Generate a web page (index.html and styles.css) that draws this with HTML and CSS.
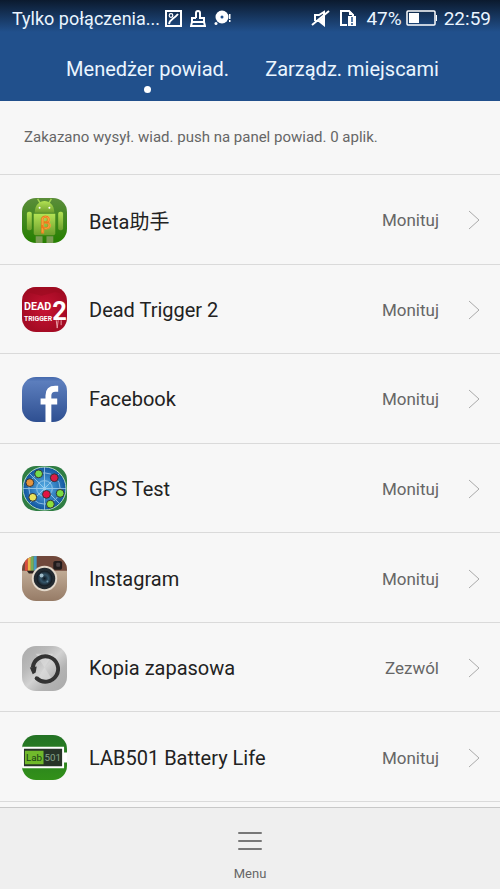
FILE: index.html
```
<!DOCTYPE html>
<html lang="pl">

<head>
  <meta charset="UTF-8">
  <meta name="viewport" content="width=device-width, initial-scale=1.0">
  <title>Menedżer powiad.</title>
  <link rel="stylesheet" href="styles.css">
</head>

<body>
  <header class="header">
    <div class="status-bar">
      <span class="carrier">Tylko połączenia...</span>
      <div class="status-icons">
        <svg width="17" height="17" viewBox="0 0 17 17" fill="none" stroke="#fff" stroke-width="2">
          <rect x="1" y="1" width="15" height="15" />
          <circle cx="6" cy="5.5" r="1.8" stroke-width="1.2" />
          <path d="M4 14c1-5 5-5 9-10" />
        </svg>
        <svg width="16" height="17" viewBox="0 0 16 17" fill="none" stroke="#fff" stroke-width="2">
          <path d="M6 8V3q0-2 2-2t2 2v5h4v4H2V8h4M2 12l-1 4h14l-1-4" />
        </svg>
        <svg width="18" height="16" viewBox="0 0 18 16" fill="#fff">
          <circle cx="8" cy="7" r="6.5" />
          <circle cx="8" cy="7" r="1.5" fill="#21508c" />
          <circle cx="2" cy="13.5" r="1.5" />
          <path d="M15 4h1.5v5H15zM15 10h1.5v2H15z" />
        </svg>
      </div>
      <div class="status-right">
        <svg width="19" height="18" viewBox="0 0 19 18" fill="none" stroke="#fff" stroke-width="2">
          <path d="M4 12V6h4l5-3v13l-5-4H4M1 16L18 2" />
          <path d="M8 11l5-4v9z" fill="#fff" stroke="none" />
        </svg>
        <svg class="sim" width="18" height="18" viewBox="0 0 18 18" fill="none" stroke="#fff" stroke-width="2">
          <path d="M8 16H2V2h8l4 4v2" />
          <path d="M10 1l5 5h-5z" fill="#fff" stroke="none" />
          <path d="M9 7h8v10H9z" fill="#fff" stroke="none" />
          <path d="M13 8v5M13 14v2" stroke="#21508c" stroke-width="1.5" />
        </svg>
        <span>47%</span>
        <svg class="battery" width="32" height="16" viewBox="0 0 32 16">
          <rect x="1" y="1" width="28" height="14" rx="1" fill="none" stroke="#fff" stroke-width="1.5" />
          <path d="M3 3h10v10H3zM30 5h1v6h-1z" fill="#fff" />
        </svg>
        <span>22:59</span>
      </div>
    </div>
    <nav class="tabs">
      <a class="tab active" href="#powiad">Menedżer powiad.</a>
      <a class="tab" href="#miejsca">Zarządz. miejscami</a>
    </nav>
  </header>

  <main class="content">
    <p class="summary">Zakazano wysył. wiad. push na panel powiad. 0 aplik.</p>

    <div class="app-list">
      <a class="app" href="#beta">
        <svg class="app-icon" viewBox="0 0 46 46">
          <defs>
            <linearGradient id="betaBg" x2="0" y2="1">
              <stop stop-color="#5b8d3a" />
              <stop offset="1" stop-color="#258000" />
            </linearGradient>
            <linearGradient id="droid" x2="0" y2="1">
              <stop stop-color="#b4e354" />
              <stop offset="1" stop-color="#6d9f2d" />
            </linearGradient>
          </defs>
          <rect width="46" height="46" fill="url(#betaBg)" />
          <path d="M16 1l3 5M30 1l-3 5" stroke="#a5d653" stroke-width="1.5" />
          <path d="M13 15C13-1 33-1 33 15z" fill="url(#droid)" />
          <circle cx="18" cy="10" r="1" fill="#fff" />
          <circle cx="28" cy="10" r="1" fill="#fff" />
          <path d="M12 16h22v20q0 2-2 2H14q-2 0-2-2z" fill="url(#droid)" />
          <rect x="5" y="14" width="5" height="19" rx="2" fill="url(#droid)" />
          <rect x="37" y="14" width="5" height="19" rx="2" fill="url(#droid)" />
          <path d="M14 39h7v7h-7zM25 39h7v7h-7z" fill="#7b9b55" />
          <text class="beta-mark" x="24" y="32" text-anchor="middle">β</text>
        </svg>
        <span class="app-name">Beta助手</span>
        <span class="app-state">Monituj</span>
        <svg class="chevron" viewBox="0 0 12 20"><path d="M1 1l10 9-10 9" /></svg>
      </a>

      <a class="app" href="#dead-trigger">
        <svg class="app-icon" viewBox="0 0 46 46">
          <defs>
            <radialGradient id="deadBg">
              <stop stop-color="#c81434" />
              <stop offset="1" stop-color="#a50b24" />
            </radialGradient>
          </defs>
          <rect width="46" height="46" fill="url(#deadBg)" />
          <path d="M0 0h46v8L34 5 20 9 8 6 0 10z" fill="#9b0b20" opacity=".6" />
          <g class="dead-mark">
            <text x="2" y="24" font-size="11">DEAD</text>
            <text x="2" y="35" font-size="7">TRIGGER</text>
            <text x="31" y="34" font-size="26">2</text>
          </g>
          <path d="M35 34l1 8 1-8M40 34v5" stroke="#e7a0a8" fill="none" />
        </svg>
        <span class="app-name">Dead Trigger 2</span>
        <span class="app-state">Monituj</span>
        <svg class="chevron" viewBox="0 0 12 20"><path d="M1 1l10 9-10 9" /></svg>
      </a>

      <a class="app" href="#facebook">
        <svg class="app-icon" viewBox="0 0 46 46">
          <defs>
            <linearGradient id="fbBg" x2="0" y2="1">
              <stop stop-color="#4468ac" />
              <stop offset=".1" stop-color="#5c7ebd" />
              <stop offset="1" stop-color="#2e4f91" />
            </linearGradient>
          </defs>
          <rect width="46" height="46" fill="url(#fbBg)" />
          <path d="M27 46V19q0-7 7-7h3M19 25h17" fill="none" stroke="#fff" stroke-width="6" />
        </svg>
        <span class="app-name">Facebook</span>
        <span class="app-state">Monituj</span>
        <svg class="chevron" viewBox="0 0 12 20"><path d="M1 1l10 9-10 9" /></svg>
      </a>

      <a class="app" href="#gps-test">
        <svg class="app-icon" viewBox="0 0 46 46">
          <defs>
            <radialGradient id="gpsBg">
              <stop stop-color="#5db4ea" />
              <stop offset="1" stop-color="#12569f" />
            </radialGradient>
          </defs>
          <rect width="46" height="46" fill="#2f7e43" />
          <circle cx="23" cy="23" r="22" fill="url(#gpsBg)" stroke="#b7dcc5" />
          <g fill="none" stroke="#b7dcf4" stroke-width="1" opacity=".7">
            <circle cx="23" cy="23" r="8" />
            <circle cx="23" cy="23" r="16" />
            <path d="M23 1v44M1 23h44M8 8l30 30M38 8L8 38" />
          </g>
          <g stroke="#333" stroke-width="1">
            <circle cx="17" cy="8" r="4" fill="#75dc4d" />
            <circle cx="33" cy="12" r="4" fill="#d91c46" />
            <circle cx="8" cy="17" r="4" fill="#e4953e" />
            <circle cx="11" cy="32" r="4" fill="#e9e35b" />
            <circle cx="25" cy="29" r="4" fill="#e31443" />
            <circle cx="39" cy="28" r="4" fill="#79dc43" />
            <circle cx="29" cy="39" r="4" fill="#8ddf3b" />
          </g>
        </svg>
        <span class="app-name">GPS Test</span>
        <span class="app-state">Monituj</span>
        <svg class="chevron" viewBox="0 0 12 20"><path d="M1 1l10 9-10 9" /></svg>
      </a>

      <a class="app" href="#instagram">
        <svg class="app-icon" viewBox="0 0 46 46">
          <defs>
            <linearGradient id="instaBg" x2="0" y2="1">
              <stop stop-color="#d5c3ad" />
              <stop offset="1" stop-color="#967b66" />
            </linearGradient>
            <radialGradient id="lens">
              <stop stop-color="#0e1822" />
              <stop offset=".5" stop-color="#35566a" />
              <stop offset="1" stop-color="#11161c" />
            </radialGradient>
          </defs>
          <rect width="46" height="46" fill="url(#instaBg)" />
          <path d="M0 0h46v15H0z" fill="#70483b" />
          <path d="M3 0h3v15H3z" fill="#d94b3d" />
          <path d="M6 0h3v15H6z" fill="#e9b54a" />
          <path d="M9 0h3v15H9z" fill="#77af57" />
          <path d="M12 0h3v15h-3z" fill="#479bc2" />
          <path d="M5 15h9v3H7z" fill="#2c211e" />
          <rect x="32" y="5" width="9" height="9" rx="2" fill="#211b1c" />
          <rect x="35" y="7" width="4" height="4" rx="1" fill="#4b4245" />
          <circle cx="23" cy="23" r="13" fill="#e3d8ca" />
          <circle cx="23" cy="23" r="11" fill="#222a30" />
          <circle cx="23" cy="23" r="8" fill="url(#lens)" />
          <circle cx="20" cy="20" r="2" fill="#a1bdca" />
          <circle cx="26" cy="26" r="1" fill="#6a8fa4" />
        </svg>
        <span class="app-name">Instagram</span>
        <span class="app-state">Monituj</span>
        <svg class="chevron" viewBox="0 0 12 20"><path d="M1 1l10 9-10 9" /></svg>
      </a>

      <a class="app" href="#kopia">
        <svg class="app-icon" viewBox="0 0 46 46">
          <defs>
            <linearGradient id="metal" x2="1" y2="1">
              <stop stop-color="#aaa" />
              <stop offset=".3" stop-color="#b9b9b9" />
              <stop offset=".5" stop-color="#d2d2d2" />
              <stop offset=".7" stop-color="#b3b3b3" />
              <stop offset="1" stop-color="#aaa" />
            </linearGradient>
          </defs>
          <rect width="46" height="46" fill="url(#metal)" />
          <path d="M23 22L14 8h18zM23 22l-9 14h18z" fill="#ddd" opacity=".6" />
          <path d="M15 33A13 13 0 1 0 11 22" fill="none" stroke="#333" stroke-width="4" />
          <circle cx="15" cy="33" r="2" fill="#333" />
          <path d="M8 22l7-1-1 6-3 2z" fill="#333" />
        </svg>
        <span class="app-name">Kopia zapasowa</span>
        <span class="app-state">Zezwól</span>
        <svg class="chevron" viewBox="0 0 12 20"><path d="M1 1l10 9-10 9" /></svg>
      </a>

      <a class="app" href="#lab501">
        <svg class="app-icon" viewBox="0 0 46 46">
          <defs>
            <linearGradient id="labBg" x2="0" y2="1">
              <stop stop-color="#237225" />
              <stop offset="1" stop-color="#329119" />
            </linearGradient>
          </defs>
          <rect width="46" height="46" fill="url(#labBg)" />
          <path d="M0 12h43v6h3v10h-3v6H0z" fill="#fff" />
          <path d="M2 14h39v18H2z" fill="#273428" />
          <path d="M3 16h19v14H3z" fill="#70b92b" />
          <g class="lab-mark">
            <text x="4" y="27" fill="#183e17">Lab</text>
            <text x="23" y="27" fill="#87a48a">501</text>
          </g>
        </svg>
        <span class="app-name">LAB501 Battery Life</span>
        <span class="app-state">Monituj</span>
        <svg class="chevron" viewBox="0 0 12 20"><path d="M1 1l10 9-10 9" /></svg>
      </a>
    </div>
  </main>

  <footer class="toolbar">
    <button class="menu-button" type="button">
      <svg width="24" height="18" viewBox="0 0 24 18" stroke="#777" stroke-width="2" stroke-linecap="round">
        <path d="M1 1h22M1 9h22M1 17h22" />
      </svg>
      Menu
    </button>
  </footer>
</body>

</html>
```
FILE: styles.css
```
:root {
  --blue: #21508c;
  --bg-color: #f7f7f7;
  --border-color: #dadada;
  --text-color: #222;
  --muted-color: #666;
}

* {
  box-sizing: border-box;
}

body {
  display: flex;
  flex-direction: column;
  min-height: 100vh;
  margin: 0;
  background: var(--bg-color);
  color: var(--text-color);
  font-family: Roboto, "Noto Sans CJK SC", sans-serif;
}

a {
  color: inherit;
  text-decoration: none;
}

svg {
  display: block;
  flex-shrink: 0;
}

/* Header */
.header {
  background: linear-gradient(#0b1a2e, var(--blue) 32px);
  color: #eaf5ff;
}

.status-bar {
  display: flex;
  align-items: center;
  height: 36px;
  padding: 0 9px 0 12px;
  font-size: 19px;
}

.carrier {
  font-size: 18px;
}

.status-icons {
  display: flex;
  align-items: center;
  gap: 8px;
  margin-left: 5px;
}

.status-right {
  display: flex;
  align-items: center;
  margin-left: auto;
}

.sim {
  margin: 0 9px;
}

.battery {
  margin: 0 6px 0 4px;
}

.tabs {
  display: flex;
  justify-content: center;
  gap: 36px;
  height: 65px;
  padding: 21px 0 0 5px;
  font-size: 20px;
  line-height: 24px;
}

.tab {
  display: flex;
  flex-direction: column;
  align-items: center;
  gap: 5px;
}

.tab.active::after {
  content: "";
  width: 7px;
  height: 7px;
  border-radius: 50%;
  background: #fff;
}

/* App list */
.content {
  flex: 1;
  display: flex;
  flex-direction: column;
}

.summary {
  margin: 0;
  padding: 24px 24px 25px;
  border-bottom: 1px solid var(--border-color);
  color: var(--muted-color);
  font-size: 15px;
  line-height: 24px;
}

.app-list {
  flex: 1;
  display: grid;
  grid-auto-rows: 1fr;
  padding-bottom: 5px;
}

.app {
  display: flex;
  align-items: center;
  padding: 2px 20px 0 22px;
  border-bottom: 1px solid var(--border-color);
}

.app-icon {
  width: 45px;
  height: 45px;
  margin-right: 22px;
  border-radius: 14px;
}

.app-name {
  flex: 1;
  font-size: 20px;
}

.app-state {
  color: var(--muted-color);
  font-size: 17px;
}

.chevron {
  width: 12px;
  height: 20px;
  margin-left: 29px;
  fill: none;
  stroke: #aaa;
}

/* Lettering inside the app icons */
.beta-mark {
  fill: #ffd45c;
  stroke: #ee7a1c;
  font-size: 19px;
}

.dead-mark {
  fill: #fff;
  font-weight: bold;
}

.lab-mark {
  font-size: 10px;
}

/* Bottom bar */
.toolbar {
  display: flex;
  justify-content: center;
  height: 82px;
  border-top: 1px solid #c8c8c8;
  background: #efefef;
}

.menu-button {
  display: flex;
  flex-direction: column;
  align-items: center;
  gap: 16px;
  padding: 24px 20px 0;
  border: none;
  background: none;
  color: var(--muted-color);
  font-family: inherit;
  font-size: 13px;
  line-height: 16px;
  cursor: pointer;
}
```
